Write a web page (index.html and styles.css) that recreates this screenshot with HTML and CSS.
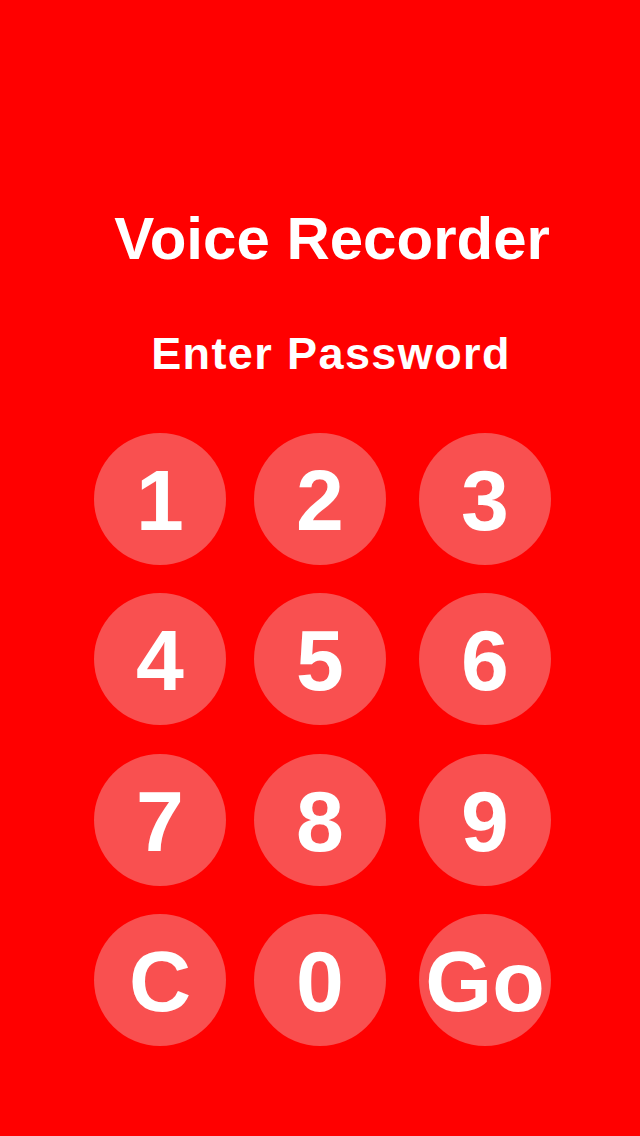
FILE: index.html
```html
<!DOCTYPE html>
<html lang="en">
<head>
<meta charset="utf-8">
<title>Voice Recorder</title>
<link rel="stylesheet" href="styles.css">
</head>
<body>
<main class="screen">
  <h1 class="title">Voice Recorder</h1>
  <h2 class="subtitle">Enter Password</h2>
  <div class="keypad">
    <button class="key">1</button>
    <button class="key">2</button>
    <button class="key key-right">3</button>
    <button class="key">4</button>
    <button class="key">5</button>
    <button class="key key-right">6</button>
    <button class="key">7</button>
    <button class="key">8</button>
    <button class="key key-right">9</button>
    <button class="key">C</button>
    <button class="key">0</button>
    <button class="key key-right">Go</button>
  </div>
</main>
</body>
</html>
```
FILE: styles.css
```css
html, body {
  margin: 0;
  padding: 0;
  background: #ff0000;
}
.screen {
  width: 640px;
  height: 1136px;
  background: #ff0000;
  font-family: "Liberation Sans", Arial, sans-serif;
  color: #ffffff;
  padding-top: 209px;
  box-sizing: border-box;
  display: flex;
  flex-direction: column;
}
.title {
  margin: 0;
  padding-left: 24px;
  font-size: 60px;
  line-height: 60px;
  font-weight: bold;
  text-align: center;
}
.subtitle {
  margin: 62px 0 0 0;
  padding-left: 22px;
  font-size: 45px;
  line-height: 45px;
  font-weight: bold;
  letter-spacing: 1.4px;
  text-align: center;
}
.keypad {
  margin: 57px 0 0 94px;
  display: grid;
  grid-template-columns: 132px 132px 132px;
  grid-auto-rows: 132px;
  column-gap: 28px;
  row-gap: 28.33px;
}
.key {
  width: 132px;
  height: 132px;
  border: none;
  border-radius: 50%;
  background: #f95050;
  color: #ffffff;
  font-family: "Liberation Sans", Arial, sans-serif;
  font-weight: bold;
  font-size: 86px;
  line-height: 86px;
  padding: 2px 0 0 0;
  display: flex;
  align-items: center;
  justify-content: center;
  white-space: nowrap;
  overflow: visible;
}
.key-right {
  margin-left: 5px;
}
```
